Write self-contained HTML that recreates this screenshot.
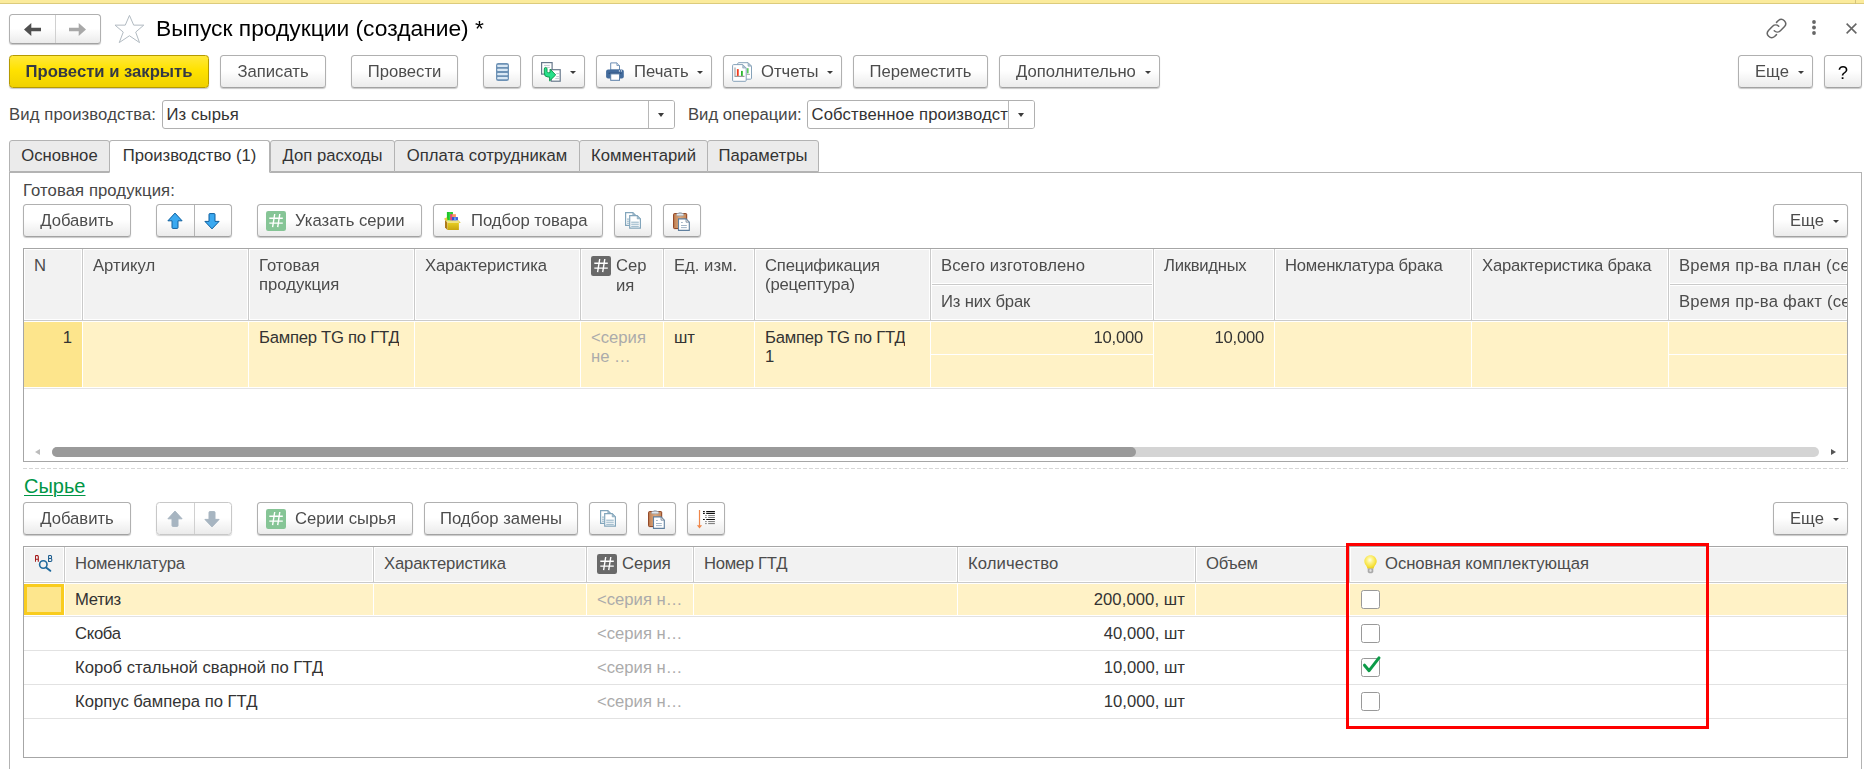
<!DOCTYPE html>
<html lang="ru">
<head>
<meta charset="utf-8">
<title>Выпуск продукции (создание)</title>
<style>
*{box-sizing:border-box;margin:0;padding:0}
html,body{width:1864px;height:769px;overflow:hidden;background:#fff}
body{font-family:"Liberation Sans",sans-serif;font-size:16.67px;color:#333;position:relative}
.abs{position:absolute}
svg{position:absolute;overflow:visible}
.topbar{left:0;top:0;width:1864px;height:4px;background:#fbeb9c;border-bottom:1px solid #dccb7c}
.btn{position:absolute;height:33px;border:1px solid #b0b0b0;border-bottom-color:#a2a2a2;border-radius:3.500px;background:linear-gradient(#ffffff 0%,#ffffff 48%,#ebebeb 100%);box-shadow:0 1px 1px rgba(0,0,0,.22);font-size:16.67px;color:#4c4c4c;white-space:nowrap;line-height:31px;text-align:center}
.btn{will-change:transform}
.btn.y{background:linear-gradient(#ffe83a 0%,#ffe200 45%,#f0d100 100%);border-color:#b59a00;color:#343945;font-weight:bold}
.btn.l{text-align:left}
.btn.dis{border-color:#c8c8c8;box-shadow:0 1px 1px rgba(0,0,0,.16)}
.dd{position:absolute;top:15px;width:0;height:0;border:3px solid transparent;border-top:3px solid #3c3c3c;border-bottom:0}
.lbl{position:absolute;color:#464646;white-space:nowrap;line-height:19px}
.inp{position:absolute;height:29px;border:1px solid #b0b0b0;border-radius:3px;background:#fff;overflow:hidden}
.inp span{position:absolute;left:3.500px;top:4px;line-height:19px;color:#333;white-space:nowrap;letter-spacing:.12px}
.inp i{position:absolute;right:0;top:0;bottom:0;width:26px;border-left:1px solid #b8b8b8;background:#fff}
.inp i:after{content:"";position:absolute;left:8.500px;top:11.500px;border:3.500px solid transparent;border-top:4px solid #3c3c3c;border-bottom:0}
.tab{position:absolute;top:140px;height:32px;background:#ebebeb;border:1px solid #b3b3b3;border-radius:3px 3px 0 0;color:#333;white-space:nowrap;text-align:center;line-height:30px}
.tab.a{background:#fff;border-bottom-color:#fff;height:33px}
.grid{position:absolute;border:1px solid #a6a6a6;background:#fff;overflow:hidden}
.h{position:absolute;color:#4c4c4c;white-space:nowrap;line-height:19px}
.c{position:absolute;white-space:nowrap;overflow:hidden;line-height:19px;color:#333}
.g{color:#ababab}
.r{text-align:right}
.cb{position:absolute;width:19px;height:19px;border:1px solid #999;border-radius:2.500px;background:#fff}
</style>
</head>
<body>

<svg width="0" height="0" style="left:-10px;top:-10px">
<defs>
<linearGradient id="gBox" x1="0" y1="0" x2="0" y2="1"><stop offset="0" stop-color="#e6cd22"/><stop offset="1" stop-color="#c9a60f"/></linearGradient>
<linearGradient id="gClip" x1="0" y1="0" x2="1" y2="0"><stop offset="0" stop-color="#c07f52"/><stop offset=".5" stop-color="#dcaa80"/><stop offset="1" stop-color="#c48658"/></linearGradient>
<radialGradient id="gBulb" cx="45%" cy="35%" r="62%"><stop offset="0" stop-color="#ffffe8"/><stop offset=".35" stop-color="#fdf38a"/><stop offset=".8" stop-color="#f6e03a"/><stop offset="1" stop-color="#edd01c"/></radialGradient>
<symbol id="i-list" viewBox="0 0 13 18"><rect width="13" height="18" rx="2.300" fill="#6c91b5"/><rect x="1.100" y="1.700" width="10.800" height="2.300" rx="1" fill="#d8e7f4"/><rect x="1.100" y="5.800" width="10.800" height="2.300" rx="1" fill="#d8e7f4"/><rect x="1.100" y="9.900" width="10.800" height="2.300" rx="1" fill="#d8e7f4"/><rect x="1.100" y="14" width="10.800" height="2.300" rx="1" fill="#d8e7f4"/></symbol>
<symbol id="i-docarrow" viewBox="0 0 21 21"><rect x=".6" y=".6" width="10.500" height="11.500" fill="#fff" stroke="#67788b" stroke-width="1.200"/><path d="M3 3.400h5.800M6 5.400h2.800" stroke="#aeb9c4" stroke-width=".8"/><rect x="10.200" y="7.700" width="9" height="11.500" fill="#fff" stroke="#67788b" stroke-width="1.200"/><path d="M15.300 11.600h2.600M15.300 14.600h2.600M14.300 16.600h3.600" stroke="#aeb9c4" stroke-width=".8"/><path d="M3.300 7 Q3.300 5.400 4.650 5.400 Q6 5.400 6 7 L6 9.400 Q6 10.700 7.300 10.700 L9 10.700 L9.100 7.100 L14.700 12.900 L8.600 18.900 L8.600 15 L7 15 Q3.300 15 3.300 11 Z" fill="#27e08a" stroke="#11994f" stroke-width="1" stroke-linejoin="round"/></symbol>
<symbol id="i-print" viewBox="0 0 18 19"><path d="M4.700 8V.9H10.900L13.500 3.500V8Z" fill="#fff" stroke="#6b8db3" stroke-width="1"/><path d="M10.900 .9V3.500H13.500" fill="#dfe8f1" stroke="#6b8db3" stroke-width=".8"/><rect x=".1" y="7.500" width="17.700" height="8.900" rx="2" fill="#436b9c"/><rect x="2.600" y="10.700" width="12.800" height="1.200" fill="#2f527c"/><rect x="4.700" y="11.900" width="8.800" height="6.400" fill="#fff" stroke="#5b7fa8" stroke-width="1"/><circle cx="13.400" cy="8.900" r=".6" fill="#fff"/><circle cx="15.400" cy="8.900" r=".6" fill="#fff"/></symbol>
<symbol id="i-report" viewBox="0 0 20 20"><path d="M6.700 .7H16L19.500 4.200V16.200Q19.500 17.200 18.500 17.200H6.700Q5.700 17.200 5.700 16.200V1.700Q5.700 .7 6.700 .7Z" fill="#fff" stroke="#86a2b9" stroke-width="1"/><path d="M16 .7V4.200H19.500Z" fill="#b3c4d2" stroke="#86a2b9" stroke-width=".6"/><rect x="14.900" y="6.200" width="1.700" height="5.200" fill="#5ccc5c"/><path d="M14.500 12.400h3.500" stroke="#b0b0b0"/><path d="M1.600 2.600H10.700L14.200 6.100V18.300Q14.200 19.300 13.200 19.300H1.600Q.6 19.300 .6 18.300V3.600Q.6 2.600 1.600 2.600Z" fill="#fff" stroke="#86a2b9" stroke-width="1"/><path d="M10.700 2.600V6.100H14.200Z" fill="#b3c4d2" stroke="#86a2b9" stroke-width=".6"/><path d="M3 5.600V14.400H12.500" fill="none" stroke="#9c9c9c" stroke-width="1.100"/><rect x="4.900" y="7.100" width="1.800" height="6.800" fill="#f2391c"/><rect x="9" y="8.900" width="1.800" height="5" fill="#2eb82e"/></symbol>
<symbol id="i-up" viewBox="0 0 16 18"><path d="M8 1.100 L15.100 8.800 L11 8.800 L11 15.600 Q11 16.400 10.200 16.400 L5.800 16.400 Q5 16.400 5 15.600 L5 8.800 L.9 8.800 Z" stroke-width="1" stroke-linejoin="round"/></symbol>
<symbol id="i-down" viewBox="0 0 16 18"><path d="M8 16.900 L15.100 9.400 L11 9.400 L11 2.400 Q11 1.600 10.200 1.600 L5.800 1.600 Q5 1.600 5 2.400 L5 9.400 L.9 9.400 Z" stroke-width="1" stroke-linejoin="round"/></symbol>
<symbol id="i-hash" viewBox="0 0 20 20"><rect width="20" height="20" rx="2.200"/><path d="M3.300 7.300H16.800M3.300 12.100H16.800M8.700 3 L6.600 16.200M13.800 3 L11.700 16.200" stroke="#fff" stroke-width="1.400" fill="none"/></symbol>
<symbol id="i-box" viewBox="0 0 17 18"><rect x="2.900" y="0" width="6" height="8.500" fill="#1fc52b"/><rect x="4.800" y=".3" width="2.600" height="8" fill="#3fe04c" opacity=".6"/><rect x="6.200" y="2.200" width="2.100" height="6.300" fill="#f23f7c"/><rect x="8.200" y="2.200" width="3.700" height="6.300" fill="#ff8f62"/><rect x="7.900" y="5.100" width="6" height="3.400" fill="#3650d6"/><rect x="10" y="5.300" width="2.200" height="3.200" fill="#5fa0f0"/><path d="M0 6.800 L2.900 5.300 L3.600 8.600 L3.400 10.800 Z" fill="#e6d03c"/><path d="M13.900 7.900 L16.800 10.800 L14.900 10.800 L13.500 8.700 Z" fill="#d6be1e"/><path d="M1 8 L3.400 10.800 L3.400 18 L1 15.400 Z" fill="#ad7a1c"/><rect x="3.400" y="8.700" width="11.500" height="2.100" fill="#efe480"/><rect x="3.400" y="10.800" width="11.500" height="7.200" fill="url(#gBox)"/></symbol>
<symbol id="i-copy" viewBox="0 0 16 17"><path d="M.6 .6H7.800L10.400 3.200V13.300H.6Z" fill="#fff" stroke="#82a5bb" stroke-width="1.200"/><path d="M7.800 .6V3.200H10.400Z" fill="#a9c2d2" stroke="#82a5bb" stroke-width=".6"/><path d="M2 7.100h2.200M2 9.200h2.200M2 11.200h2.200" stroke="#8fb0c4" stroke-width="1"/><path d="M4.700 3.700H12.200L15.400 6.900V16.100H4.700Z" fill="#fff" stroke="#82a5bb" stroke-width="1.200"/><path d="M12.200 3.700V6.900H15.400Z" fill="#a9c2d2" stroke="#82a5bb" stroke-width=".6"/><path d="M6.200 10.200h7.600M6.200 12.200h7.600M6.200 14.300h7.600" stroke="#8fb0c4" stroke-width="1"/></symbol>
<symbol id="i-paste" viewBox="0 0 17 19"><rect x=".6" y="1.600" width="13.100" height="15" rx=".8" fill="url(#gClip)" stroke="#8c3d1b" stroke-width="1"/><rect x="5.700" y="0" width="2.800" height="2.400" rx="1.200" fill="#d7dce2" stroke="#8f9aa6" stroke-width=".5"/><rect x="3.500" y="1.500" width="7.200" height="2.300" rx="1" fill="#e4e8ed" stroke="#8f9aa6" stroke-width=".6"/><path d="M5.500 6.900H13L16.300 10.200V18.400H5.500Z" fill="#fff" stroke="#60809f" stroke-width="1.100"/><path d="M13 6.900V10.200H16.300Z" fill="#f4e3d8" stroke="#60809f" stroke-width=".7"/><path d="M8 10.500h1.800M8 13.500h5.800M8 15.600h5.800" stroke="#a3b6c8" stroke-width="1"/></symbol>
<symbol id="i-sort" viewBox="0 0 20 20"><path d="M3.500 0V16" stroke="#f0874a" stroke-width="1.200"/><path d="M.9 15.300H6.100L3.500 18.400Z" fill="#f0874a"/><path d="M7 1.600h1.800M10.200 1.600h8.700M7 3.500h1.800M10.200 3.500h8.700M7 9.500h1.800M10.200 9.500h8.700" stroke="#111" stroke-width="1.100"/><path d="M9.200 5.600h1.500M12.200 5.600h6.700M9.200 7.500h1.500M12.200 7.500h6.700M9.200 11.600h1.500M12.200 11.600h6.700M9.200 13.600h1.500M12.200 13.600h6.700" stroke="#777" stroke-width="1"/></symbol>
<symbol id="i-search" viewBox="0 0 20 18"><circle cx="8.300" cy="9.500" r="3.700" fill="none" stroke="#1f6a9e" stroke-width="1.600"/><path d="M11.400 12.800L15.300 15.800" stroke="#1f6a9e" stroke-width="2" stroke-linecap="round"/><path d="M.4 6.800V1.800Q.4 .4 1.850 .4Q3.300 .4 3.300 1.800V6.800M.4 4.200H3.300" fill="none" stroke="#a31515" stroke-width="1.100"/><path d="M13.600 .5V6.500H15.600Q16.900 6.500 16.900 5Q16.900 3.500 15.600 3.500H13.600M15.400 3.500Q16.600 3.500 16.600 2Q16.600 .5 15.400 .5H13.600" fill="none" stroke="#1b5c8e" stroke-width="1.100"/></symbol>
<symbol id="i-bulb" viewBox="0 0 13 19"><path d="M6.500 .3C3 .3 .3 3 .3 6.300C.3 8.600 1.600 9.900 2.800 11.700L3.600 13.800H9.400L10.200 11.700C11.400 9.900 12.700 8.600 12.700 6.300C12.700 3 10 .3 6.500 .3Z" fill="url(#gBulb)"/><path d="M3.700 13.600H9.300V16.200Q9.300 18.200 6.500 18.200Q3.700 18.200 3.700 16.200Z" fill="#a9a9a9"/><rect x="5.400" y="14.200" width="2.200" height="2.600" rx=".8" fill="#e3e3e3"/></symbol>
</defs>
</svg>

<div class="abs topbar"></div><div class="abs" style="left:1855px;top:0;width:1px;height:4px;background:#d4c37a"></div>
<div class="btn" style="left:9px;top:14px;width:92px;height:30px"></div>
<div class="abs" style="left:55px;top:15px;width:1px;height:28px;background:#d0d0d0"></div>
<svg style="left:9px;top:14px" width="92" height="30" viewBox="0 0 92 30">
<path d="M15 15.500 L22.300 8.900 L22.300 13.700 L32 13.700 L32 17.300 L22.300 17.300 L22.300 22.100 Z" fill="#4f4f4f"/>
<path d="M77 15.500 L69.700 8.900 L69.700 13.700 L60 13.700 L60 17.300 L69.700 17.300 L69.700 22.100 Z" fill="#a8a8a8"/>
</svg>
<svg style="left:114px;top:14px" width="32" height="30" viewBox="0 0 32 30"><path d="M15.460 1.400 L19.700 11.140 L29.780 11.140 L21.700 18.100 L25.500 28.600 L15.460 21.760 L5.240 28.600 L9.260 18.100 L.98 11.140 L11.270 11.140 Z" fill="#fff" stroke="#b1bac1" stroke-width="1"/></svg>
<div class="abs" style="left:156px;top:13px;font-size:22.800px;line-height:30px;color:#000;white-space:nowrap">Выпуск продукции (создание) *</div>
<svg style="left:1762px;top:13.500px" width="29" height="29" viewBox="0 0 26 26" fill="none" stroke="#666" stroke-width="1.350" stroke-linecap="round">
<path d="M11 15 a3.900 3.900 0 0 0 5.500 0 l3.700-3.700 a3.900 3.900 0 0 0-5.500-5.500 l-1.700 1.700"/>
<path d="M15 11 a3.900 3.900 0 0 0-5.500 0 l-3.700 3.700 a3.900 3.900 0 0 0 5.500 5.500 l1.700-1.700"/></svg>
<svg style="left:1808px;top:18px" width="12" height="20" viewBox="0 0 12 20" fill="#666"><circle cx="6" cy="4" r="1.900"/><circle cx="6" cy="9.500" r="1.900"/><circle cx="6" cy="15" r="1.900"/></svg>
<svg style="left:1844.500px;top:21.500px" width="13" height="13" viewBox="0 0 12 12" stroke="#666" stroke-width="1.400" fill="none"><path d="M1.500 1.500 L10.500 10.500 M10.500 1.500 L1.500 10.500"/></svg>
<div class="btn y" style="left:9px;top:55px;width:200px">Провести и закрыть</div>
<div class="btn" style="left:220px;top:55px;width:106px">Записать</div>
<div class="btn" style="left:351px;top:55px;width:107px">Провести</div>
<div class="btn" style="left:483px;top:55px;width:38px"><svg style="left:12px;top:7px" width="13" height="18"><use href="#i-list"/></svg></div>
<div class="btn" style="left:532px;top:55px;width:53px"><svg style="left:7.5px;top:6px" width="21" height="21"><use href="#i-docarrow"/></svg><span class="dd" style="left:37px"></span></div>
<div class="btn l" style="left:596px;top:55px;width:116px;padding-left:37px"><svg style="left:9px;top:6px" width="18" height="19"><use href="#i-print"/></svg>Печать<span class="dd" style="left:100px"></span></div>
<div class="btn l" style="left:723px;top:55px;width:119px;padding-left:37px"><svg style="left:8px;top:6px" width="20" height="20"><use href="#i-report"/></svg>Отчеты<span class="dd" style="left:103px"></span></div>
<div class="btn" style="left:853px;top:55px;width:135px">Переместить</div>
<div class="btn l" style="left:999px;top:55px;width:161px;padding-left:16px">Дополнительно<span class="dd" style="left:145px"></span></div>
<div class="btn l" style="left:1738px;top:55px;width:75px;padding-left:16px">Еще<span class="dd" style="left:59px"></span></div>
<div class="btn" style="left:1824px;top:55px;width:38px;color:#000;font-size:18.500px;line-height:33px">?</div>
<div class="lbl" style="left:9px;top:105px;letter-spacing:.12px">Вид производства:</div>
<div class="inp" style="left:162px;top:100px;width:513px"><span>Из сырья</span><i></i></div>
<div class="lbl" style="left:688px;top:105px">Вид операции:</div>
<div class="inp" style="left:807px;top:100px;width:228px"><span>Собственное производст</span><i></i></div>
<div class="abs" style="left:9px;top:172px;width:1853px;height:600px;border:1px solid #b3b3b3;border-bottom:0"></div>
<div class="tab" style="left:9px;width:101px">Основное</div>
<div class="tab" style="left:270px;width:125px">Доп расходы</div>
<div class="tab" style="left:394px;width:186px">Оплата сотрудникам</div>
<div class="tab" style="left:579px;width:129px">Комментарий</div>
<div class="tab" style="left:707px;width:112px">Параметры</div>
<div class="tab a" style="left:109px;width:161px">Производство (1)</div>
<div class="lbl" style="left:23px;top:181px;letter-spacing:.1px">Готовая продукция:</div>
<div class="btn" style="left:23px;top:204px;width:108px">Добавить</div>
<div class="btn" style="left:156px;top:204px;width:76px"><svg style="left:10px;top:7px" width="16" height="18" fill="#3ba9f0" stroke="#0f5f9e"><use href="#i-up"/></svg><svg style="left:47px;top:7px" width="16" height="18" fill="#3ba9f0" stroke="#0f5f9e"><use href="#i-down"/></svg></div>
<div class="abs" style="left:194px;top:205px;width:1px;height:31px;background:#b4b4b4"></div>
<div class="btn l" style="left:257px;top:204px;width:165px;padding-left:37px"><svg style="left:8px;top:6px" width="20" height="20" fill="#86c596"><use href="#i-hash"/></svg>Указать серии</div>
<div class="btn l" style="left:433px;top:204px;width:170px;padding-left:37px"><svg style="left:10px;top:7px" width="17" height="18"><use href="#i-box"/></svg>Подбор товара</div>
<div class="btn" style="left:614px;top:204px;width:38px"><svg style="left:10px;top:7.2px" width="16" height="17"><use href="#i-copy"/></svg></div>
<div class="btn" style="left:663px;top:204px;width:38px"><svg style="left:9px;top:7px" width="17" height="19"><use href="#i-paste"/></svg></div>
<div class="btn l" style="left:1773px;top:204px;width:75px;padding-left:16px">Еще<span class="dd" style="left:59px"></span></div>
<div class="grid" style="left:23px;top:248px;width:1825px;height:214px">
<div class="abs" style="left:1px;top:1px;width:1821px;height:69px;background:#f2f2f2"></div>
<div class="abs" style="left:0px;top:70px;width:1823px;height:1px;background:#fff"></div>
<div class="abs" style="left:0px;top:71px;width:1823px;height:1px;background:#cacaca"></div>
<div class="abs" style="left:0px;top:72px;width:1823px;height:1px;background:#fff"></div>
<div class="abs" style="left:57px;top:0px;width:1px;height:70px;background:#fff"></div>
<div class="abs" style="left:58px;top:0px;width:1px;height:71px;background:#cacaca"></div>
<div class="abs" style="left:59px;top:0px;width:1px;height:70px;background:#fff"></div>
<div class="abs" style="left:223px;top:0px;width:1px;height:70px;background:#fff"></div>
<div class="abs" style="left:224px;top:0px;width:1px;height:71px;background:#cacaca"></div>
<div class="abs" style="left:225px;top:0px;width:1px;height:70px;background:#fff"></div>
<div class="abs" style="left:389px;top:0px;width:1px;height:70px;background:#fff"></div>
<div class="abs" style="left:390px;top:0px;width:1px;height:71px;background:#cacaca"></div>
<div class="abs" style="left:391px;top:0px;width:1px;height:70px;background:#fff"></div>
<div class="abs" style="left:555px;top:0px;width:1px;height:70px;background:#fff"></div>
<div class="abs" style="left:556px;top:0px;width:1px;height:71px;background:#cacaca"></div>
<div class="abs" style="left:557px;top:0px;width:1px;height:70px;background:#fff"></div>
<div class="abs" style="left:638px;top:0px;width:1px;height:70px;background:#fff"></div>
<div class="abs" style="left:639px;top:0px;width:1px;height:71px;background:#cacaca"></div>
<div class="abs" style="left:640px;top:0px;width:1px;height:70px;background:#fff"></div>
<div class="abs" style="left:729px;top:0px;width:1px;height:70px;background:#fff"></div>
<div class="abs" style="left:730px;top:0px;width:1px;height:71px;background:#cacaca"></div>
<div class="abs" style="left:731px;top:0px;width:1px;height:70px;background:#fff"></div>
<div class="abs" style="left:905px;top:0px;width:1px;height:70px;background:#fff"></div>
<div class="abs" style="left:906px;top:0px;width:1px;height:71px;background:#cacaca"></div>
<div class="abs" style="left:907px;top:0px;width:1px;height:70px;background:#fff"></div>
<div class="abs" style="left:1128px;top:0px;width:1px;height:70px;background:#fff"></div>
<div class="abs" style="left:1129px;top:0px;width:1px;height:71px;background:#cacaca"></div>
<div class="abs" style="left:1130px;top:0px;width:1px;height:70px;background:#fff"></div>
<div class="abs" style="left:1249px;top:0px;width:1px;height:70px;background:#fff"></div>
<div class="abs" style="left:1250px;top:0px;width:1px;height:71px;background:#cacaca"></div>
<div class="abs" style="left:1251px;top:0px;width:1px;height:70px;background:#fff"></div>
<div class="abs" style="left:1446px;top:0px;width:1px;height:70px;background:#fff"></div>
<div class="abs" style="left:1447px;top:0px;width:1px;height:71px;background:#cacaca"></div>
<div class="abs" style="left:1448px;top:0px;width:1px;height:70px;background:#fff"></div>
<div class="abs" style="left:1643px;top:0px;width:1px;height:70px;background:#fff"></div>
<div class="abs" style="left:1644px;top:0px;width:1px;height:71px;background:#cacaca"></div>
<div class="abs" style="left:1645px;top:0px;width:1px;height:70px;background:#fff"></div>
<div class="abs" style="left:908px;top:34px;width:220px;height:1px;background:#fff"></div>
<div class="abs" style="left:908px;top:35px;width:220px;height:1px;background:#cacaca"></div>
<div class="abs" style="left:908px;top:36px;width:220px;height:1px;background:#fff"></div>
<div class="abs" style="left:1646px;top:34px;width:177px;height:1px;background:#fff"></div>
<div class="abs" style="left:1646px;top:35px;width:177px;height:1px;background:#cacaca"></div>
<div class="abs" style="left:1646px;top:36px;width:177px;height:1px;background:#fff"></div>
<div class="h" style="left:10px;top:7px;">N</div>
<div class="h" style="left:69px;top:7px;">Артикул</div>
<div class="h" style="left:235px;top:7px;">Готовая<br>продукция</div>
<div class="h" style="left:401px;top:7px;letter-spacing:-0.14px;">Характеристика</div>
<div class="h" style="left:650px;top:7px;">Ед. изм.</div>
<div class="h" style="left:741px;top:7px;letter-spacing:-0.17px;">Спецификация<br>(рецептура)</div>
<div class="h" style="left:917px;top:7px;letter-spacing:0.09px;">Всего изготовлено</div>
<div class="h" style="left:1140px;top:7px;letter-spacing:-0.28px;">Ликвидных</div>
<div class="h" style="left:1261px;top:7px;letter-spacing:-0.22px;">Номенклатура брака</div>
<div class="h" style="left:1458px;top:7px;letter-spacing:-0.2px;">Характеристика брака</div>
<div class="h" style="left:1655px;top:7px;letter-spacing:0.24px;">Время пр-ва план (сек.)</div>
<div class="h" style="left:917px;top:43px;letter-spacing:-0.18px;">Из них брак</div>
<div class="h" style="left:1655px;top:43px;letter-spacing:0.24px;">Время пр-ва факт (сек.)</div>
<svg style="left:567px;top:7px" width="20" height="20" fill="#696969"><use href="#i-hash"/></svg>
<div class="h" style="left:592px;top:7px;">Сер</div>
<div class="h" style="left:592px;top:27px;">ия</div>
<div class="abs" style="left:0px;top:73px;width:58px;height:65px;background:#fde58c"></div>
<div class="abs" style="left:59px;top:73px;width:165px;height:65px;background:#fff2c6"></div>
<div class="abs" style="left:58px;top:73px;width:1px;height:65px;background:#fff"></div>
<div class="abs" style="left:225px;top:73px;width:165px;height:65px;background:#fff2c6"></div>
<div class="abs" style="left:224px;top:73px;width:1px;height:65px;background:#fff"></div>
<div class="abs" style="left:391px;top:73px;width:165px;height:65px;background:#fff2c6"></div>
<div class="abs" style="left:390px;top:73px;width:1px;height:65px;background:#fff"></div>
<div class="abs" style="left:557px;top:73px;width:82px;height:65px;background:#fff2c6"></div>
<div class="abs" style="left:556px;top:73px;width:1px;height:65px;background:#fff"></div>
<div class="abs" style="left:640px;top:73px;width:90px;height:65px;background:#fff2c6"></div>
<div class="abs" style="left:639px;top:73px;width:1px;height:65px;background:#fff"></div>
<div class="abs" style="left:731px;top:73px;width:175px;height:65px;background:#fff2c6"></div>
<div class="abs" style="left:730px;top:73px;width:1px;height:65px;background:#fff"></div>
<div class="abs" style="left:907px;top:73px;width:222px;height:65px;background:#fff2c6"></div>
<div class="abs" style="left:906px;top:73px;width:1px;height:65px;background:#fff"></div>
<div class="abs" style="left:1130px;top:73px;width:120px;height:65px;background:#fff2c6"></div>
<div class="abs" style="left:1129px;top:73px;width:1px;height:65px;background:#fff"></div>
<div class="abs" style="left:1251px;top:73px;width:196px;height:65px;background:#fff2c6"></div>
<div class="abs" style="left:1250px;top:73px;width:1px;height:65px;background:#fff"></div>
<div class="abs" style="left:1448px;top:73px;width:196px;height:65px;background:#fff2c6"></div>
<div class="abs" style="left:1447px;top:73px;width:1px;height:65px;background:#fff"></div>
<div class="abs" style="left:1645px;top:73px;width:178px;height:65px;background:#fff2c6"></div>
<div class="abs" style="left:1644px;top:73px;width:1px;height:65px;background:#fff"></div>
<div class="abs" style="left:907px;top:105px;width:222px;height:1px;background:#fff"></div>
<div class="abs" style="left:1645px;top:105px;width:178px;height:1px;background:#fff"></div>
<div class="abs" style="left:0px;top:138px;width:1823px;height:1px;background:#fff"></div>
<div class="abs" style="left:0px;top:139px;width:1823px;height:1px;background:#e4e4e4"></div>
<div class="c r" style="left:0px;top:79px;width:48px;">1</div>
<div class="c" style="left:235px;top:79px;letter-spacing:-.25px">Бампер TG по ГТД</div>
<div class="c g" style="left:567px;top:79px;">&lt;серия<br>не …</div>
<div class="c" style="left:650px;top:79px;">шт</div>
<div class="c" style="left:741px;top:79px;letter-spacing:-.25px">Бампер TG по ГТД<br>1</div>
<div class="c r" style="left:907px;top:79px;width:212px;letter-spacing:-0.25px;">10,000</div>
<div class="c r" style="left:1130px;top:79px;width:110px;letter-spacing:-0.25px;">10,000</div>
<div class="abs" style="left:28px;top:198px;width:1767px;height:10px;border-radius:5px;background:#d4d4d4"></div>
<div class="abs" style="left:28px;top:198px;width:1084px;height:10px;border-radius:5px;background:#9a9a9a"></div>
<div class="abs" style="left:11px;top:200px;border:3px solid transparent;border-right:5px solid #bcbcbc;border-left:0"></div>
<div class="abs" style="left:1807px;top:200px;border:3px solid transparent;border-left:5px solid #555;border-right:0"></div>
</div>
<div class="abs" style="left:23px;top:468px;width:1825px;height:1px;background:repeating-linear-gradient(90deg,#d6d6d6 0,#d6d6d6 4px,transparent 4px,transparent 6px)"></div>
<div class="abs" style="left:24px;top:475px;font-size:20px;line-height:23px;color:#009646;white-space:nowrap;text-decoration:underline;text-decoration-thickness:1px;text-underline-offset:2px">Сырье</div>
<div class="btn" style="left:23px;top:502px;width:108px">Добавить</div>
<div class="btn dis" style="left:156px;top:502px;width:76px"><svg style="left:10px;top:7px" width="16" height="18" fill="#a7b5c1" stroke="#a7b5c1"><use href="#i-up"/></svg><svg style="left:47px;top:7px" width="16" height="18" fill="#a7b5c1" stroke="#a7b5c1"><use href="#i-down"/></svg></div>
<div class="abs" style="left:194px;top:503px;width:1px;height:31px;background:#d0d0d0"></div>
<div class="btn l" style="left:257px;top:502px;width:156px;padding-left:37px"><svg style="left:8px;top:6px" width="20" height="20" fill="#86c596"><use href="#i-hash"/></svg>Серии сырья</div>
<div class="btn" style="left:424px;top:502px;width:154px">Подбор замены</div>
<div class="btn" style="left:589px;top:502px;width:38px"><svg style="left:10px;top:7.2px" width="16" height="17"><use href="#i-copy"/></svg></div>
<div class="btn" style="left:638px;top:502px;width:38px"><svg style="left:9px;top:7px" width="17" height="19"><use href="#i-paste"/></svg></div>
<div class="btn" style="left:687px;top:502px;width:38px"><svg style="left:8px;top:7px" width="20" height="20"><use href="#i-sort"/></svg></div>
<div class="btn l" style="left:1773px;top:502px;width:75px;padding-left:16px">Еще<span class="dd" style="left:59px"></span></div>
<div class="grid" style="left:23px;top:546px;width:1825px;height:212px">
<div class="abs" style="left:1px;top:1px;width:1821px;height:33px;background:#f2f2f2"></div>
<div class="abs" style="left:0px;top:34px;width:1823px;height:1px;background:#fff"></div>
<div class="abs" style="left:0px;top:35px;width:1823px;height:1px;background:#cacaca"></div>
<div class="abs" style="left:0px;top:36px;width:1823px;height:1px;background:#fff"></div>
<div class="abs" style="left:39px;top:0px;width:1px;height:34px;background:#fff"></div>
<div class="abs" style="left:40px;top:0px;width:1px;height:35px;background:#cacaca"></div>
<div class="abs" style="left:41px;top:0px;width:1px;height:34px;background:#fff"></div>
<div class="abs" style="left:348px;top:0px;width:1px;height:34px;background:#fff"></div>
<div class="abs" style="left:349px;top:0px;width:1px;height:35px;background:#cacaca"></div>
<div class="abs" style="left:350px;top:0px;width:1px;height:34px;background:#fff"></div>
<div class="abs" style="left:561px;top:0px;width:1px;height:34px;background:#fff"></div>
<div class="abs" style="left:562px;top:0px;width:1px;height:35px;background:#cacaca"></div>
<div class="abs" style="left:563px;top:0px;width:1px;height:34px;background:#fff"></div>
<div class="abs" style="left:668px;top:0px;width:1px;height:34px;background:#fff"></div>
<div class="abs" style="left:669px;top:0px;width:1px;height:35px;background:#cacaca"></div>
<div class="abs" style="left:670px;top:0px;width:1px;height:34px;background:#fff"></div>
<div class="abs" style="left:932px;top:0px;width:1px;height:34px;background:#fff"></div>
<div class="abs" style="left:933px;top:0px;width:1px;height:35px;background:#cacaca"></div>
<div class="abs" style="left:934px;top:0px;width:1px;height:34px;background:#fff"></div>
<div class="abs" style="left:1170px;top:0px;width:1px;height:34px;background:#fff"></div>
<div class="abs" style="left:1171px;top:0px;width:1px;height:35px;background:#cacaca"></div>
<div class="abs" style="left:1172px;top:0px;width:1px;height:34px;background:#fff"></div>
<div class="abs" style="left:1324px;top:0px;width:1px;height:34px;background:#fff"></div>
<div class="abs" style="left:1325px;top:0px;width:1px;height:35px;background:#cacaca"></div>
<div class="abs" style="left:1326px;top:0px;width:1px;height:34px;background:#fff"></div>
<div class="h" style="left:51px;top:7px;letter-spacing:-0.15px;">Номенклатура</div>
<div class="h" style="left:360px;top:7px;letter-spacing:-0.14px;">Характеристика</div>
<div class="h" style="left:680px;top:7px;letter-spacing:-0.3px;">Номер ГТД</div>
<div class="h" style="left:944px;top:7px;letter-spacing:0.1px;">Количество</div>
<div class="h" style="left:1182px;top:7px;letter-spacing:-0.3px;">Объем</div>
<svg style="left:573px;top:7px" width="20" height="20" fill="#696969"><use href="#i-hash"/></svg>
<div class="h" style="left:598px;top:7px;">Серия</div>
<div class="h" style="left:1361px;top:7px;letter-spacing:-0.05px;">Основная комплектующая</div>
<svg style="left:10.700000000000003px;top:7.7999999999999545px" width="20" height="18"><use href="#i-search"/></svg>
<svg style="left:1339.5px;top:7.7000000000000455px" width="13" height="19"><use href="#i-bulb"/></svg>
<div class="abs" style="left:0px;top:37px;width:40px;height:31px;background:#fde68d;border:3px solid #f9cc1e"></div>
<div class="abs" style="left:41px;top:37px;width:308px;height:31px;background:#fff2c6"></div>
<div class="abs" style="left:40px;top:37px;width:1px;height:31px;background:#fff"></div>
<div class="abs" style="left:350px;top:37px;width:212px;height:31px;background:#fff2c6"></div>
<div class="abs" style="left:349px;top:37px;width:1px;height:31px;background:#fff"></div>
<div class="abs" style="left:563px;top:37px;width:106px;height:31px;background:#fff2c6"></div>
<div class="abs" style="left:562px;top:37px;width:1px;height:31px;background:#fff"></div>
<div class="abs" style="left:670px;top:37px;width:263px;height:31px;background:#fff2c6"></div>
<div class="abs" style="left:669px;top:37px;width:1px;height:31px;background:#fff"></div>
<div class="abs" style="left:934px;top:37px;width:237px;height:31px;background:#fff2c6"></div>
<div class="abs" style="left:933px;top:37px;width:1px;height:31px;background:#fff"></div>
<div class="abs" style="left:1172px;top:37px;width:153px;height:31px;background:#fff2c6"></div>
<div class="abs" style="left:1171px;top:37px;width:1px;height:31px;background:#fff"></div>
<div class="abs" style="left:1326px;top:37px;width:497px;height:31px;background:#fff2c6"></div>
<div class="abs" style="left:1325px;top:37px;width:1px;height:31px;background:#fff"></div>
<div class="abs" style="left:0px;top:69px;width:1823px;height:1px;background:#e2e2e2"></div>
<div class="abs" style="left:0px;top:103px;width:1823px;height:1px;background:#e2e2e2"></div>
<div class="abs" style="left:0px;top:137px;width:1823px;height:1px;background:#e2e2e2"></div>
<div class="abs" style="left:0px;top:171px;width:1823px;height:1px;background:#e2e2e2"></div>
<div class="c" style="left:51px;top:43px;letter-spacing:-0.3px;">Метиз</div>
<div class="c g" style="left:573px;top:43px;">&lt;серия н…</div>
<div class="c r" style="left:934px;top:43px;width:227px;letter-spacing:0.08px;">200,000, шт</div>
<div class="cb" style="left:1337px;top:43px"></div>
<div class="c" style="left:51px;top:77px;letter-spacing:-0.3px;">Скоба</div>
<div class="c g" style="left:573px;top:77px;">&lt;серия н…</div>
<div class="c r" style="left:934px;top:77px;width:227px;">40,000, шт</div>
<div class="cb" style="left:1337px;top:77px"></div>
<div class="c" style="left:51px;top:111px;">Короб стальной сварной по ГТД</div>
<div class="c g" style="left:573px;top:111px;">&lt;серия н…</div>
<div class="c r" style="left:934px;top:111px;width:227px;">10,000, шт</div>
<div class="cb" style="left:1337px;top:111px"></div>
<div class="c" style="left:51px;top:145px;">Корпус бампера по ГТД</div>
<div class="c g" style="left:573px;top:145px;">&lt;серия н…</div>
<div class="c r" style="left:934px;top:145px;width:227px;">10,000, шт</div>
<div class="cb" style="left:1337px;top:145px"></div>
<svg style="left:1336px;top:107px" width="22" height="22" viewBox="0 0 22 22"><path d="M4.500 11.200 L9.100 16.700 L19 3.900" fill="none" stroke="#0c9b48" stroke-width="3" stroke-linecap="round" stroke-linejoin="round"/></svg>
</div>
<div class="abs" style="left:1346px;top:543px;width:363px;height:186px;border:3px solid #fe0000"></div>
</body>
</html>
